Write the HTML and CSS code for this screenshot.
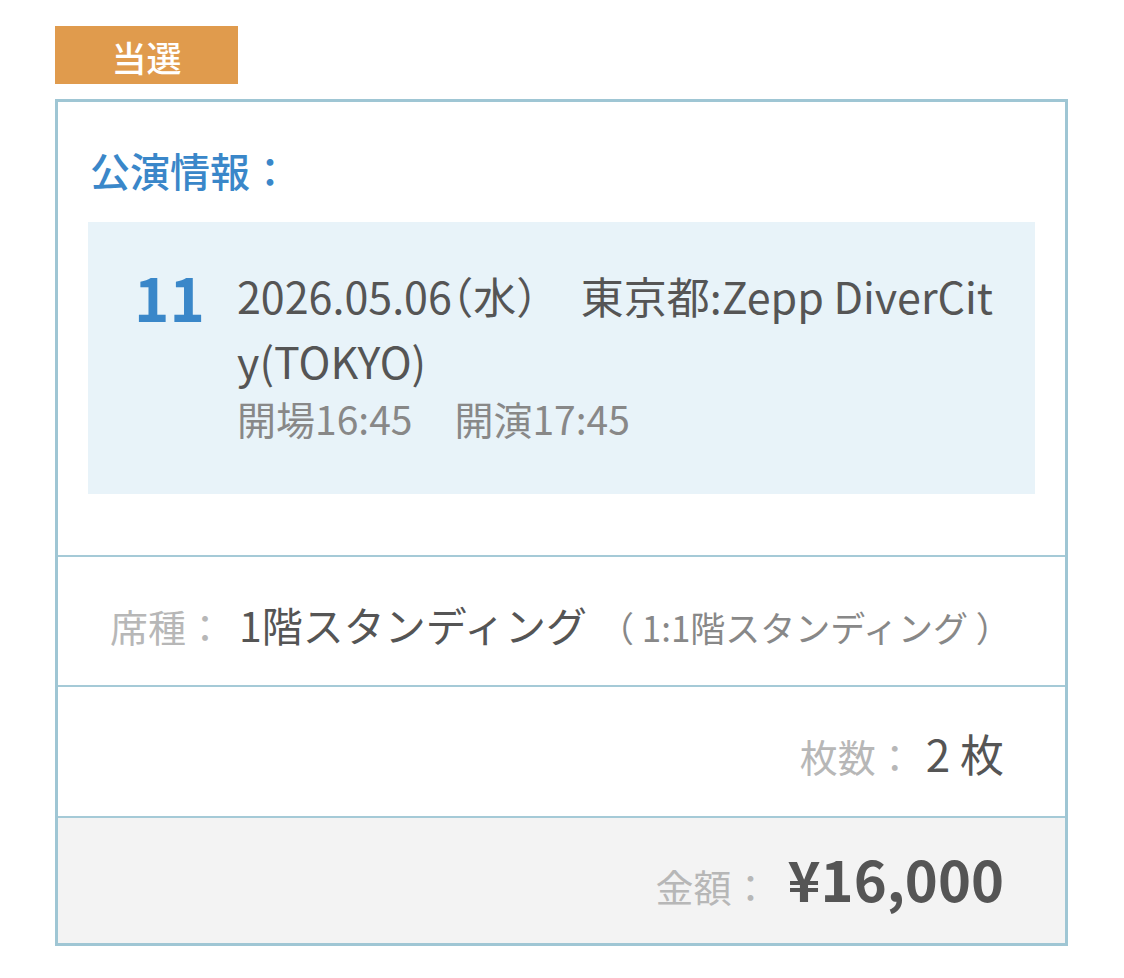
FILE: index.html
```html
<!DOCTYPE html>
<html lang="ja">
<head>
<meta charset="utf-8">
<title>当選</title>
<link rel="stylesheet" href="styles.css">
</head>
<body>
<div class="page">
  <div class="badge">当選</div>
  <div class="card">
    <section class="perf">
      <h2 class="perf-title">公演情報：</h2>
      <div class="perf-box">
        <div class="perf-no">11</div>
        <div class="perf-detail">
          <p class="perf-main">2026.05.06<span class="halt">（水）</span>　東京都:Zepp DiverCity(TOKYO)</p>
          <p class="perf-time"><span class="time">開場16:45</span><span class="time">開演17:45</span></p>
        </div>
      </div>
    </section>
    <div class="row row-seat">
      <span class="label">席種：</span>
      <span class="value">1階スタンディング</span>
      <span class="sub">（ 1:1階スタンディング ）</span>
    </div>
    <div class="row row-qty">
      <span class="label">枚数：</span>
      <span class="value">2 枚</span>
    </div>
    <div class="row row-price">
      <span class="label">金額：</span>
      <span class="price">¥16,000</span>
    </div>
  </div>
</div>
</body>
</html>
```

FILE: styles.css
```css
html, body {
  margin: 0;
  background: #ffffff;
}
body {
  font-family: "Noto Sans CJK JP", "Noto Sans", sans-serif;
  color: #555555;
}
.page {
  padding: 26px 56px 32px 55px;
}
.badge {
  width: 183px;
  height: 58px;
  background: #e09b4d;
  color: #ffffff;
  font-size: 35px;
  font-weight: 500;
  display: flex;
  align-items: center;
  justify-content: center;
  padding-top: 2px;
  box-sizing: border-box;
}
.card {
  margin-top: 15px;
  border: 3px solid #9fc6d4;
}
.perf {
  padding: 38px 30px 61px 30px;
}
.perf-title {
  margin: 0;
  padding-left: 2px;
  font-size: 40px;
  line-height: 60px;
  font-weight: 500;
  color: #3a87c9;
}
.perf-box {
  margin-top: 22px;
  background: #e8f3f9;
  padding: 41px 35px 50px 46px;
  display: flex;
  align-items: flex-start;
}
.perf-no {
  flex: 0 0 103px;
  margin-top: 3px;
  font-size: 60px;
  line-height: 60px;
  font-weight: 700;
  color: #3a87c9;
}
.perf-detail {
  flex: 1 1 auto;
  min-width: 0;
}
.perf-main {
  margin: 0;
  font-size: 43px;
  line-height: 65px;
  color: #555555;
  word-break: break-all;
}
.halt {
  font-feature-settings: "halt" 1;
}
.perf-time {
  margin: 0;
  display: flex;
  gap: 42px;
  font-size: 39px;
  line-height: 51px;
  color: #888888;
}
.row {
  box-sizing: border-box;
  border-top: 2px solid #a5cad7;
  display: flex;
  align-items: baseline;
  line-height: 60px;
}
.label {
  font-size: 38px;
  color: #b7b7b7;
}
.row-seat {
  height: 130px;
  padding: 37px 30px 0 52px;
}
.row-seat .value {
  margin-left: 15px;
  font-size: 41px;
  color: #555555;
}
.row-seat .sub {
  margin-left: 12px;
  font-size: 35px;
  color: #888888;
  white-space: nowrap;
}
.row-qty {
  height: 131px;
  padding: 36px 61px 0 0;
  justify-content: flex-end;
}
.row-qty .value {
  margin-left: 12px;
  font-size: 44px;
  color: #555555;
}
.row-price {
  height: 127px;
  padding: 30px 61px 0 0;
  justify-content: flex-end;
  background: #f3f3f3;
}
.price {
  margin-left: 18px;
  font-size: 56px;
  font-weight: 700;
  color: #555555;
}
```
